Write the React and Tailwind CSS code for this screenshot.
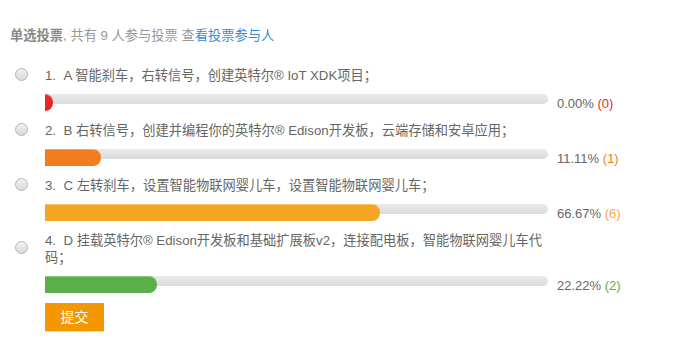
import React from "react";

const options = [
  { label: "1.\u00a0\u00a0A 智能刹车，右转信号，创建英特尔® IoT XDK项目；", pct: 0, count: 0, fill: "bg-[#e8262b]", countColor: "text-[#e8262b]" },
  { label: "2.\u00a0\u00a0B 右转信号，创建并编程你的英特尔® Edison开发板，云端存储和安卓应用；", pct: 11.11, count: 1, fill: "bg-[#f27c22]", countColor: "text-[#f27c22]" },
  { label: "3.\u00a0\u00a0C 左转刹车，设置智能物联网婴儿车，设置智能物联网婴儿车；", pct: 66.67, count: 6, fill: "bg-[#f4a623]", countColor: "text-[#f7a64a]" },
  { label: "4.\u00a0\u00a0D 挂载英特尔® Edison开发板和基础扩展板v2，连接配电板，智能物联网婴儿车代码；", pct: 22.22, count: 2, fill: "bg-[#5aaf4b]", countColor: "text-[#5aaf4b]" },
];

function Radio() {
  return (
    <span className="-mt-[3px] block h-[13px] w-[13px] shrink-0 rounded-full border border-[#b5b5b5] bg-gradient-to-b from-[#f2f2f2] to-[#d9d9d9]" />
  );
}

export default function App() {
  return (
    <div
      className="w-[674px] h-[351px] bg-white text-[13px] text-[#666]"
      style={{ fontFamily: '"Liberation Sans", "Noto Sans CJK SC", sans-serif' }}
    >
      <div className="pl-[10px] pt-[27px] text-[13.25px] leading-[17px] text-[#999]">
        <span className="font-bold text-[#888]">单选投票</span>, 共有 9 人参与投票 查<span className="text-[#3a8bd8]">看投票参与人</span>
      </div>
      <div className="mt-[23px]">
        {options.map((o, i) => (
          <div key={i}>
            <div className="flex items-center">
              <div className="w-[45px] shrink-0 pl-[15px]">
                <Radio />
              </div>
              <div className="w-[503px] text-[13.25px] leading-[17px]">{o.label}</div>
            </div>
            <div className="mt-[10px] ml-[45px] flex h-[28px] items-start">
              <div className="relative h-[10px] w-[503px] shrink-0 rounded-r-[6px] bg-gradient-to-b from-[#e9e9e9] to-[#dcdcdc]">
                <div
                  className={`absolute left-0 top-0 h-[17px] rounded-r-[8px] ${o.fill} shadow-[inset_0_1px_0_rgba(255,255,255,0.3)]`}
                  style={{ width: o.pct === 0 ? 8 : `${o.pct}%` }}
                />
              </div>
              <div className="ml-[9px] mt-[1px] leading-[17px] whitespace-nowrap">
                {o.pct.toFixed(2)}% <span className={o.countColor}>({o.count})</span>
              </div>
            </div>
          </div>
        ))}
      </div>
      <div className="ml-[45px] -mt-[1px]">
        <button className="h-[28px] w-[59px] bg-[#f39800] text-[14px] text-white shadow-[0_1px_0_#ddd]">提交</button>
      </div>
    </div>
  );
}
